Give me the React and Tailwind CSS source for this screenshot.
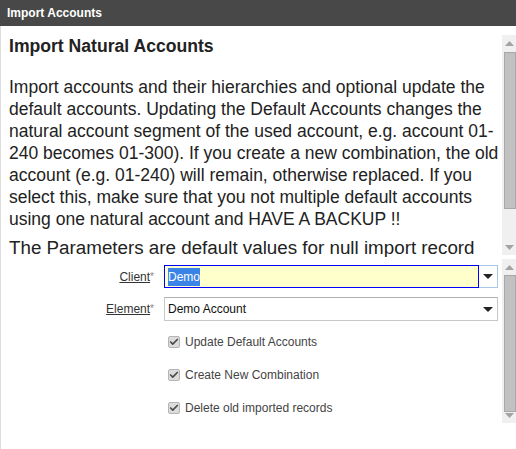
import { Check } from 'lucide-react';

const ScrollArrow = ({ up }) => (
  <div className="h-[16px] flex items-center justify-center">
    <svg width="9" height="5" viewBox="0 0 9 5">
      <path d={up ? 'M0 5 L4.5 0 L9 5 Z' : 'M0 0 L4.5 5 L9 0 Z'} fill="#a3a3a3" />
    </svg>
  </div>
);

function Scrollbar({ thumbTop, thumbHeight }) {
  return (
    <div className="w-[14px] h-full bg-[#f0f0f0] flex flex-col">
      <ScrollArrow up />
      <div className="flex-1 relative">
        <div
          className="absolute left-[2px] right-0 bg-[#c1c1c1] border border-[#a8a8a8]"
          style={{ top: thumbTop, height: thumbHeight }}
        />
      </div>
      <ScrollArrow />
    </div>
  );
}

const DropArrow = () => (
  <svg width="10" height="5" viewBox="0 0 10 5">
    <path d="M0 0 L5 5 L10 0 Z" fill="#222" />
  </svg>
);

function CheckRow({ label }) {
  return (
    <div className="h-[33px] flex items-center gap-[5px] pl-[167px]">
      <div className="w-[12px] h-[12px] rounded-[2px] border border-[#b5b5b5] bg-[#dcdcdc] flex items-center justify-center">
        <Check size={10} strokeWidth={4} className="text-[#4a4a4a]" />
      </div>
      <span className="text-[12px] text-[#444]">{label}</span>
    </div>
  );
}

export default function App() {
  return (
    <div className="w-[516px] h-[449px] bg-white overflow-hidden" style={{ fontFamily: '"Liberation Sans", Arial, sans-serif' }}>
      {/* Title bar */}
      <div className="h-[26px] bg-[#484848] text-white font-bold text-[12px] px-[7px] flex items-center">
        Import Accounts
      </div>

      <div className="border-l border-[#dddddd] h-[423px] flex flex-col">
        {/* Description panel */}
        <div className="h-[231px] flex">
          <div className="flex-1 overflow-hidden pl-[8px] pr-[2px] pt-[9px] text-[#222]">
            <div className="text-[17.6px] font-bold leading-[22px]">Import Natural Accounts</div>
            <p className="text-[17.5px] leading-[22px] mt-[19px]">
              Import accounts and their hierarchies and optional update the default accounts. Updating the Default Accounts changes the natural account segment of the used account, e.g. account 01-240 becomes 01-300). If you create a new combination, the old account (e.g. 01-240) will remain, otherwise replaced. If you select this, make sure that you not multiple default accounts using one natural account and HAVE A BACKUP !!
            </p>
            <p className="text-[18.8px] leading-[22px] mt-[7px] whitespace-nowrap">The Parameters are default values for null import record</p>
          </div>
          <div className="pt-[9px] pb-[2px]">
            <Scrollbar thumbTop={1} thumbHeight={157} />
          </div>
        </div>

        {/* Parameter panel */}
        <div className="h-[164px] mt-[2px] flex">
          <div className="flex-1 pt-[6px]">
            <div className="flex items-center h-[23px]">
              <div className="w-[153px] text-right text-[12px] text-[#333]">
                <span className="underline">Client</span>
                <span className="text-[10px] text-[#888] align-top relative top-[1px]">*</span>
              </div>
              <div className="ml-[10px] flex h-[23px]">
                <div className="w-[315px] bg-[#ffffcc] border border-[#0000ff] flex items-center pl-[3px] text-[12px]">
                  <span className="bg-[#3a84e8] text-white">Demo</span>
                </div>
                <div className="w-[19px] flex items-center justify-center border-y border-r border-[#a9c8e8]">
                  <DropArrow />
                </div>
              </div>
            </div>
            <div className="flex items-center h-[24px] mt-[9px]">
              <div className="w-[153px] text-right text-[12px] text-[#333]">
                <span className="underline">Element</span>
                <span className="text-[10px] text-[#888] align-top relative top-[1px]">*</span>
              </div>
              <div className="ml-[10px] w-[334px] h-[24px] border border-[#c8c8c8] border-t-[#b0b0b0] flex items-center justify-between pl-[3px] pr-[4px] text-[12px] text-[#111]">
                <span>Demo Account</span>
                <DropArrow />
              </div>
            </div>
            <div className="mt-[4px]">
              <CheckRow label="Update Default Accounts" />
              <CheckRow label="Create New Combination" />
              <CheckRow label="Delete old imported records" />
            </div>
          </div>
          <Scrollbar thumbTop={0} thumbHeight={137} />
        </div>
      </div>
    </div>
  );
}
